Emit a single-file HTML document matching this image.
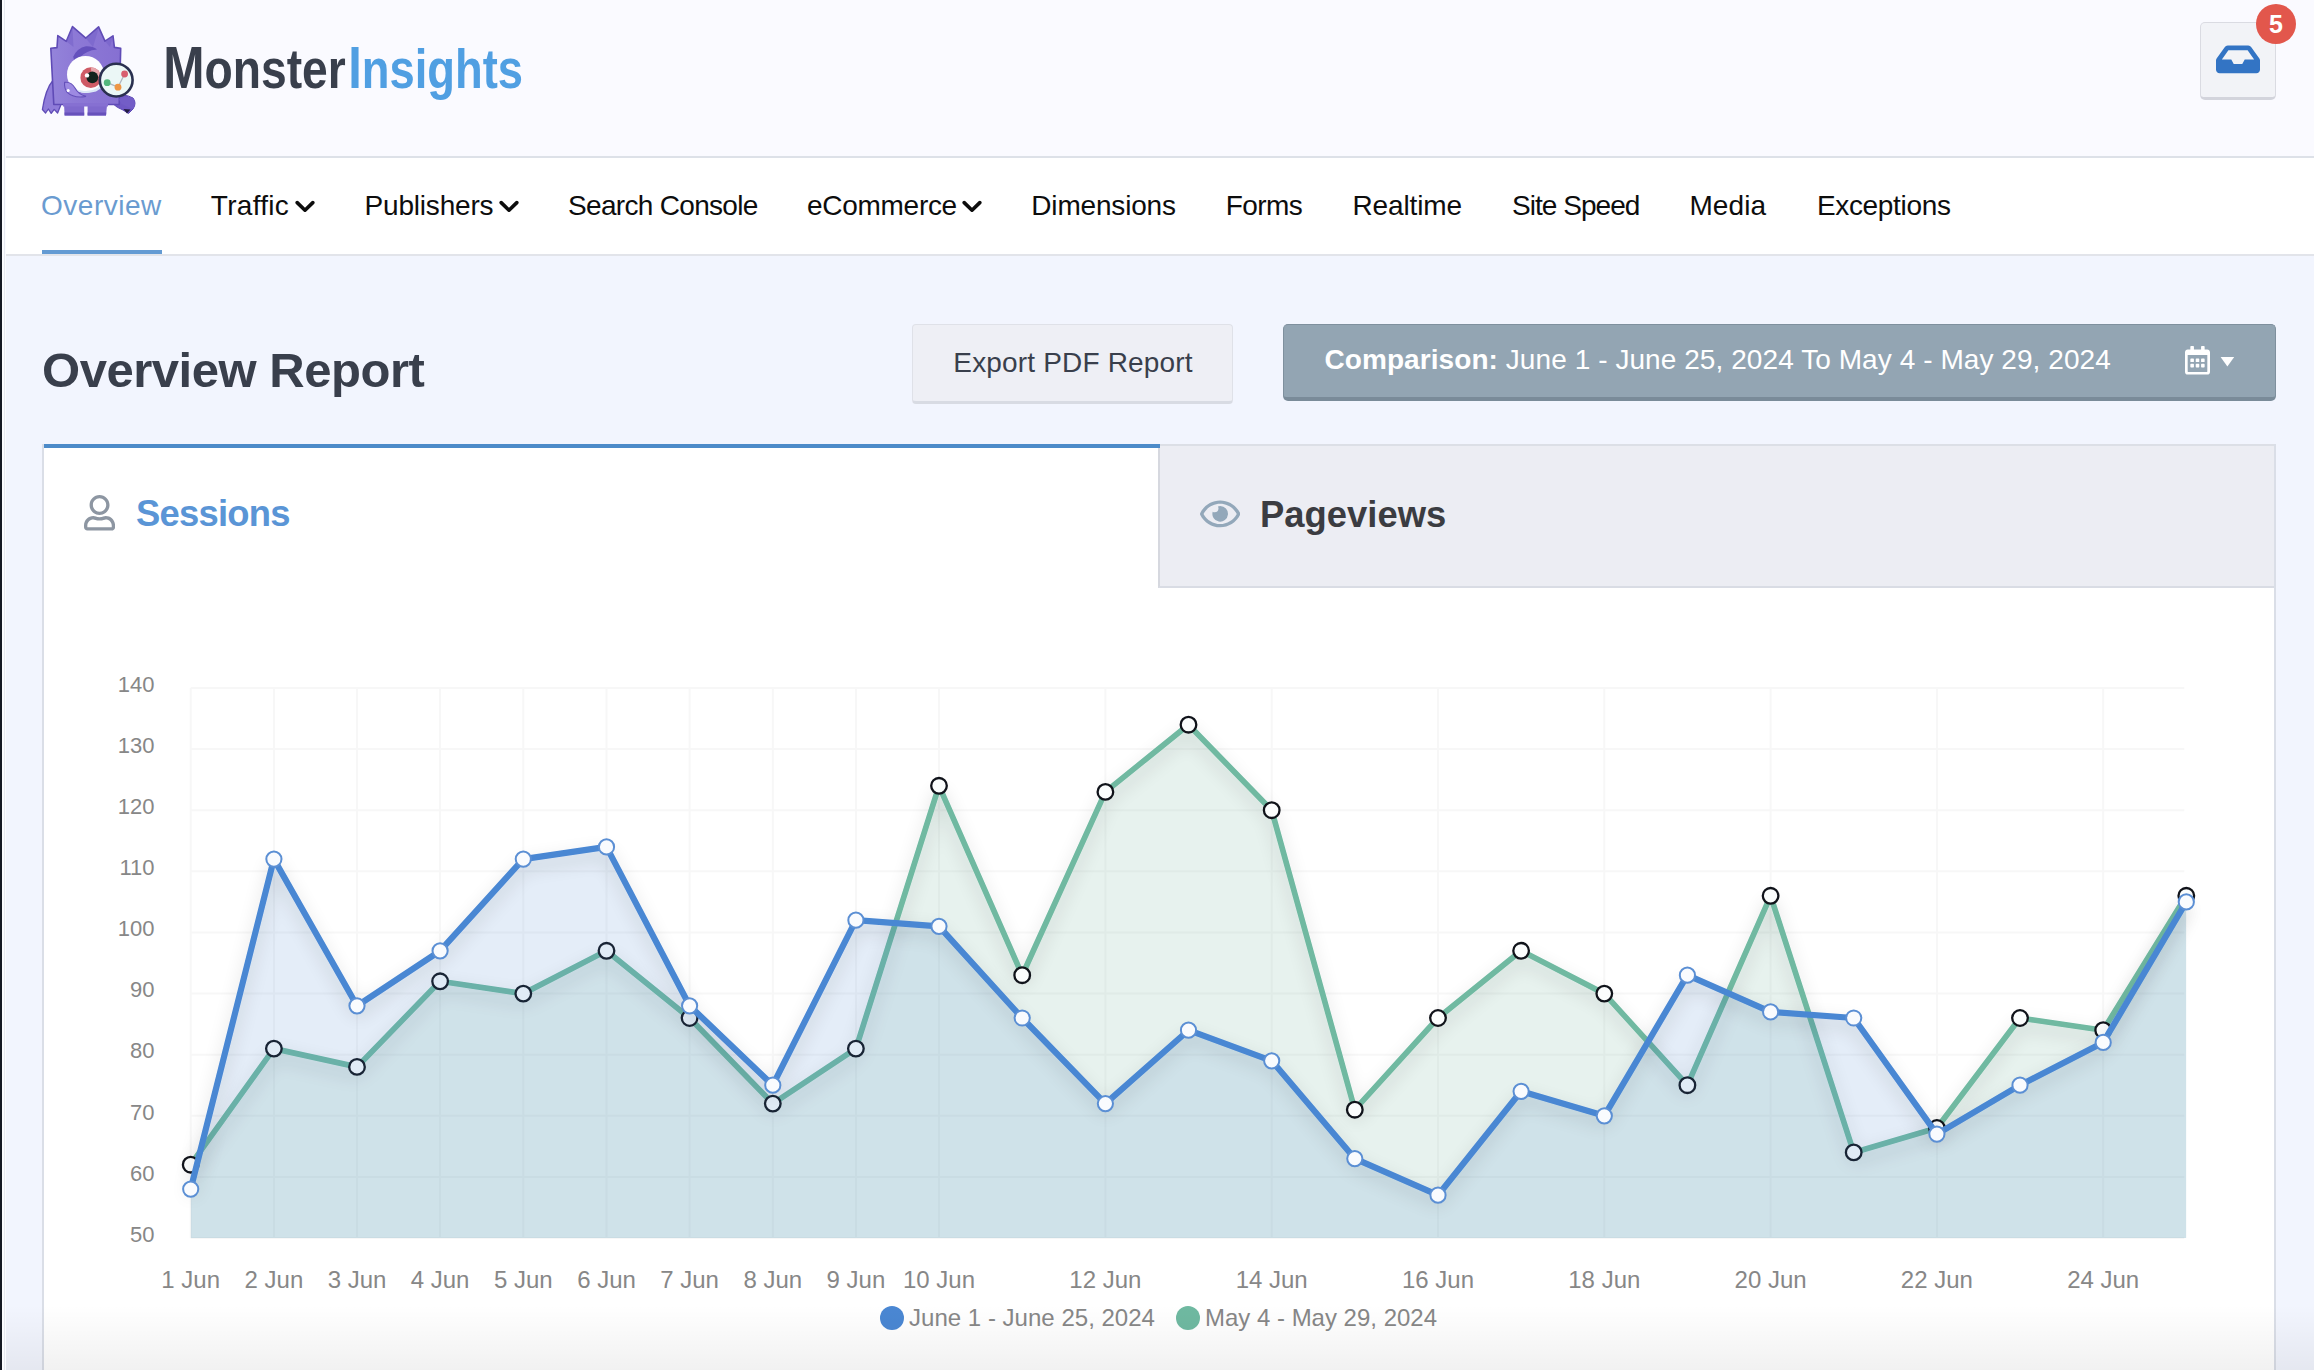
<!DOCTYPE html>
<html lang="en">
<head>
<meta charset="utf-8">
<title>MonsterInsights - Overview Report</title>
<style>
html,body{margin:0;padding:0;}
body{width:2314px;height:1370px;overflow:hidden;background:#f2f5fe;font-family:"Liberation Sans",sans-serif;position:relative;color:#393f4c;}
.abs{position:absolute;}
#edge{left:0;top:0;width:2px;height:1370px;background:#151923;z-index:50;}
#edge2{left:2px;top:0;width:4px;height:1370px;background:linear-gradient(to right,#fbfcff 0,#fbfcff 2.3px,#e6e9f1 2.3px,#e6e9f1 3.3px,#fbfcff 3.3px);z-index:50;}
#header{left:0;top:0;width:2314px;height:156px;background:#fafaff;border-bottom:2px solid #dde1e8;}
#nav{left:0;top:158px;width:2314px;height:96px;background:#fff;border-bottom:2px solid #e2e4ea;}
.nv{position:absolute;top:186px;font-size:28px;line-height:40px;color:#0d0d0d;white-space:nowrap;}
.nv.on{color:#6a9bd0;}
#uline{left:42px;top:250px;width:120px;height:4px;background:#649bd3;}
.chev{position:absolute;top:200px;width:20px;height:13px;}
#h1{left:42px;top:342px;font-size:49px;letter-spacing:-0.47px;line-height:56px;font-weight:bold;color:#393f4c;white-space:nowrap;}
#export{left:912px;top:324px;width:319px;height:76px;background:#eeeff5;border:1px solid #dfe1e8;border-bottom:3px solid #d8dbe3;border-radius:4px;box-sizing:content-box;}
#export span{position:absolute;left:40.3px;top:18.4px;letter-spacing:0.17px;font-size:28px;line-height:40px;color:#393f4c;white-space:nowrap;}
#date{left:1283px;top:324px;width:991px;height:72px;background:#93a5b3;border:1px solid #7f909e;border-bottom:4px solid #7a8b99;border-radius:5px;}
#date .t{position:absolute;left:40.5px;top:15.4px;letter-spacing:0.07px;font-size:28px;line-height:40px;color:#fff;white-space:nowrap;}
#panel{left:42px;top:444px;width:2230px;height:940px;background:#fff;border:2px solid #dadee7;border-top:none;}
#tab1{left:43.5px;top:444px;width:1116.2px;height:4px;background:#4d8bc9;z-index:2;}
#tab2{left:1158px;top:444px;width:1116px;height:144px;background:#ecedf3;border-left:2px solid #d6d8df;border-top:2px solid #dcdfe6;border-bottom:2px solid #d9dce4;box-sizing:border-box;}
#sess{left:135.9px;top:492.2px;font-size:36.4px;line-height:44px;font-weight:bold;color:#5a95d6;white-space:nowrap;letter-spacing:-0.75px;}
#pv{left:1260px;top:493px;font-size:36.4px;line-height:44px;font-weight:bold;color:#3b3c41;white-space:nowrap;letter-spacing:0.03px;}
#fade{left:0;top:1305px;width:2314px;height:65px;background:linear-gradient(to bottom,rgba(0,0,0,0),rgba(0,0,0,0.055));z-index:40;}
</style>
</head>
<body>
<div id="edge" class="abs"></div>
<div id="edge2" class="abs"></div>

<div id="header" class="abs"></div>
<svg class="abs" id="logo" style="left:20px;top:10px" width="140" height="130" viewBox="0 0 140 130">
<defs><linearGradient id="mg" x1="0" y1="0" x2="1" y2="0"><stop offset="0" stop-color="#9484da"/><stop offset="0.35" stop-color="#8d79d6"/><stop offset="1" stop-color="#8670d2"/></linearGradient></defs>
<!-- right arm behind -->
<path d="M92 86 Q104 83 113 88 Q117 93 113 99 L108.5 103.5 L103 100 Q97 98 92 93 Z" fill="#6f58c4" stroke="#5d49b4" stroke-width="1"/>
<path d="M103.5 99 L107 103.6 L110.5 99.5 Z" fill="#231b45"/>
<!-- left arm -->
<path d="M33.2 70 Q25.5 79 22.4 99.5 L25.6 103 L28.4 99 L31.2 103.4 L34.2 99.4 L37.6 103 L40.6 95.5 L38.5 72 Z" fill="#8f7cd9" stroke="#5f4bb6" stroke-width="1.3" stroke-linejoin="round"/>
<!-- spikes + body -->
<path d="M30.8 38.2 L37 37.6 L37.8 25.6 L46.3 31.4 L52.5 16.6 L65.8 28.2 L78.6 16.9 L85 31.2 L93 25.8 L94.4 37.4 L100.7 38.4 L99.2 94.5 L33.8 94.5 Z" fill="url(#mg)" stroke="#5f4bb6" stroke-width="1.6" stroke-linejoin="round"/>
<path d="M46.3 31.4 L52.5 18 L53.5 37 Z M65.8 28.2 L78.6 18.4 L73 37 Z M85 31.2 L92.6 27 L90 37 Z" fill="#7561c8" opacity="0.55"/>
<!-- legs -->
<path d="M44 93.6 H64.2 V105.4 H44.6 Z M67.6 93.6 H87.2 L86 105.4 H67.6 Z" fill="#7f69cd"/>
<path d="M44.5 102.6 H64.2 V105.6 H44.6 Z M67.6 102.6 H86.3 L86 105.6 H67.6 Z" fill="#6751bb"/>
<path d="M43 93 H88 V96.5 H43 Z" fill="#8670d2"/>
<!-- eyebrow -->
<path d="M53.2 46.8 Q57 38 66 36.2 Q73 36 77 39.5 Q66 40.5 60.5 47 Q57 50 55 53.5 Z" fill="#614dba" opacity="0.9"/>
<!-- eye -->
<circle cx="65.5" cy="64.4" r="18.5" fill="#fdfdff"/>
<path d="M50 76.5 Q60 86 76 81.5 Q84 78 84 70 Q78 82 64 81 Q55 80 50 76.5 Z" fill="#dbe7f6"/>
<circle cx="70.8" cy="67.7" r="10.4" fill="#cf5b66"/>
<path d="M70.8 57.3 A10.4 10.4 0 0 1 81 66 L72 67.5 Z" fill="#e7a6ab"/>
<circle cx="72.3" cy="67.3" r="5.9" fill="#12231d"/>
<circle cx="67" cy="65.4" r="2.2" fill="#fff"/>
<!-- smile -->
<path d="M44.6 72.4 Q51 71.4 55 78 Q58.4 84.4 66 86.4 Q54 88.6 47.2 82.4 Q44 78 44.6 72.4 Z" fill="#9d8ae2" stroke="#634fb9" stroke-width="1.1"/>
<circle cx="48.2" cy="80.4" r="1.5" fill="#fff"/>
<!-- magnifier -->
<circle cx="96.2" cy="70.1" r="16.4" fill="#ebf7f6" stroke="#2a3050" stroke-width="2.6"/>
<path d="M87.2 72.7 L98 77.2 L104.6 64" fill="none" stroke="#aeb5be" stroke-width="1.3"/>
<circle cx="104.6" cy="64" r="3.4" fill="#d85f70"/>
<circle cx="87.2" cy="72.7" r="3.4" fill="#52b67c"/>
<circle cx="98" cy="77.2" r="3.4" fill="#ee9645"/>
<!-- hand over handle -->
<path d="M99 89 Q106 85.5 113.4 88.4 Q116.6 94 112.6 99 Q106 96.5 101 93.5 Z" fill="#735dc7"/>
</svg>
<svg class="abs" id="word" style="left:160px;top:30px" width="380" height="90" viewBox="0 0 380 90">
<g font-family="Liberation Sans, sans-serif" font-weight="bold" font-size="58.6">
<text x="3.2" y="57.5" fill="#393f4c" textLength="182.5" lengthAdjust="spacingAndGlyphs"><tspan>M</tspan><tspan font-size="54.6">onster</tspan></text>
<text x="188.2" y="57.5" fill="#509fe2" textLength="174.8" lengthAdjust="spacingAndGlyphs"><tspan>I</tspan><tspan font-size="54.6">nsights</tspan></text>
</g>
</svg>

<div class="abs" id="inbox" style="left:2200px;top:22px;width:74px;height:74px;background:#f2f3f7;border:1px solid #dadbe2;border-bottom:3px solid #d3d4dc;border-radius:5px;"></div>
<svg class="abs" style="left:2216px;top:41.4px" width="44" height="36.8" viewBox="0 0 576 512" preserveAspectRatio="none"><path fill="#3374c4" d="M567.938 243.908L462.25 85.374A48.003 48.003 0 0 0 422.311 64H153.689a48 48 0 0 0-39.938 21.374L8.062 243.908A47.994 47.994 0 0 0 0 270.533V400c0 26.51 21.49 48 48 48h480c26.51 0 48-21.49 48-48V270.533a47.994 47.994 0 0 0-8.062-26.625zM162.252 128h251.497l85.333 128H376l-32 64H232l-32-64H76.918l85.334-128z"/></svg>
<div class="abs" id="badge" style="left:2256px;top:4px;width:40px;height:40px;border-radius:50%;background:#e2574c;color:#fff;font-weight:bold;font-size:25px;line-height:40px;text-align:center;">5</div>


<div id="nav" class="abs"></div>
<div class="nv on" id="nv0" style="left:41.0px;letter-spacing:0.51px">Overview</div>
<div class="nv" id="nv1" style="left:210.8px;letter-spacing:0.30px">Traffic</div>
<svg class="chev" style="left:295.2px" viewBox="0 0 20 13"><path d="M2.2 2.6 L10 10.2 L17.8 2.6" fill="none" stroke="#0d0d0d" stroke-width="3.6" stroke-linecap="round" stroke-linejoin="round"/></svg>
<div class="nv" id="nv2" style="left:364.5px;letter-spacing:-0.18px">Publishers</div>
<svg class="chev" style="left:499.2px" viewBox="0 0 20 13"><path d="M2.2 2.6 L10 10.2 L17.8 2.6" fill="none" stroke="#0d0d0d" stroke-width="3.6" stroke-linecap="round" stroke-linejoin="round"/></svg>
<div class="nv" id="nv3" style="left:568.1px;letter-spacing:-0.69px">Search Console</div>
<div class="nv" id="nv4" style="left:807.1px;letter-spacing:-0.30px">eCommerce</div>
<svg class="chev" style="left:962.4px" viewBox="0 0 20 13"><path d="M2.2 2.6 L10 10.2 L17.8 2.6" fill="none" stroke="#0d0d0d" stroke-width="3.6" stroke-linecap="round" stroke-linejoin="round"/></svg>
<div class="nv" id="nv5" style="left:1031.3px;letter-spacing:-0.18px">Dimensions</div>
<div class="nv" id="nv6" style="left:1225.7px;letter-spacing:-0.55px">Forms</div>
<div class="nv" id="nv7" style="left:1352.4px;letter-spacing:-0.11px">Realtime</div>
<div class="nv" id="nv8" style="left:1512.0px;letter-spacing:-0.96px">Site Speed</div>
<div class="nv" id="nv9" style="left:1689.4px;letter-spacing:0.10px">Media</div>
<div class="nv" id="nv10" style="left:1816.9px;letter-spacing:-0.33px">Exceptions</div>
<div id="uline" class="abs"></div>

<div id="h1" class="abs">Overview Report</div>
<div id="export" class="abs"><span>Export PDF Report</span></div>
<div id="date" class="abs"><span class="t"><b>Comparison:</b> June 1 - June 25, 2024 To May 4 - May 29, 2024</span></div>

<div id="panel" class="abs"></div>
<div id="tab1" class="abs"></div>
<div id="tab2" class="abs"></div>
<div id="sess" class="abs">Sessions</div>
<div id="pv" class="abs">Pageviews</div>
<svg class="abs" style="left:84.2px;top:495.1px" width="31.1" height="35.5" viewBox="0 0 448 512"><path fill="#8d96a2" d="M313.6 304c-28.700 0-42.500 16-89.600 16-47.100 0-60.800-16-89.600-16C60.200 304 0 364.200 0 438.400V464c0 26.500 21.500 48 48 48h352c26.500 0 48-21.500 48-48v-25.600c0-74.200-60.200-134.400-134.400-134.400zM400 464H48v-25.600c0-47.600 38.800-86.400 86.400-86.400 14.600 0 38.300 16 89.600 16 51.700 0 74.900-16 89.600-16 47.600 0 86.400 38.800 86.400 86.400V464zM224 288c79.500 0 144-64.500 144-144S303.500 0 224 0 80 64.500 80 144s64.500 144 144 144zm0-240c52.900 0 96 43.100 96 96s-43.100 96-96 96-96-43.100-96-96 43.100-96 96-96z"/></svg>
<svg class="abs" style="left:1199.9px;top:496.3px" width="40.3" height="35.8" viewBox="0 0 576 512"><path fill="#93a8ba" d="M288 144a110.940 110.940 0 0 0-31.240 5 55.400 55.400 0 0 1 7.240 27 56 56 0 0 1-56 56 55.400 55.400 0 0 1-27-7.240A111.710 111.710 0 1 0 288 144zm284.520 97.400C518.290 135.590 410.930 64 288 64S57.680 135.640 3.480 241.410a32.350 32.350 0 0 0 0 29.190C57.710 376.410 165.070 448 288 448s230.320-71.640 284.520-177.410a32.350 32.350 0 0 0 0-29.190zM288 400c-98.650 0-189.090-55-237.930-144C98.910 167 189.340 112 288 112s189.090 55 237.930 144C477.100 345 386.660 400 288 400z"/></svg>
<svg class="abs" style="left:2185.2px;top:346.3px" width="25" height="28.6" viewBox="0 0 448 512"><path fill="#fff" d="M148 288h-40c-6.600 0-12-5.400-12-12v-40c0-6.600 5.400-12 12-12h40c6.600 0 12 5.400 12 12v40c0 6.600-5.400 12-12 12zm108-12v-40c0-6.600-5.400-12-12-12h-40c-6.600 0-12 5.400-12 12v40c0 6.600 5.400 12 12 12h40c6.600 0 12-5.400 12-12zm96 0v-40c0-6.600-5.400-12-12-12h-40c-6.600 0-12 5.400-12 12v40c0 6.600 5.400 12 12 12h40c6.600 0 12-5.400 12-12zm-96 96v-40c0-6.600-5.400-12-12-12h-40c-6.600 0-12 5.400-12 12v40c0 6.600 5.400 12 12 12h40c6.600 0 12-5.400 12-12zm-96 0v-40c0-6.600-5.400-12-12-12h-40c-6.600 0-12 5.400-12 12v40c0 6.600 5.400 12 12 12h40c6.600 0 12-5.400 12-12zm192 0v-40c0-6.600-5.400-12-12-12h-40c-6.600 0-12 5.400-12 12v40c0 6.600 5.400 12 12 12h40c6.600 0 12-5.400 12-12zm96-260v352c0 26.500-21.500 48-48 48H48c-26.500 0-48-21.500-48-48V112c0-26.500 21.500-48 48-48h48V12c0-6.600 5.400-12 12-12h40c6.600 0 12 5.400 12 12v52h128V12c0-6.600 5.400-12 12-12h40c6.600 0 12 5.400 12 12v52h48c26.500 0 48 21.500 48 48zm-48 346V160H48v298c0 3.300 2.700 6 6 6h340c3.300 0 6-2.700 6-6z"/></svg>
<svg class="abs" style="left:2219px;top:355px" width="17" height="14" viewBox="0 0 17 14"><path fill="#fff" d="M1.6 2 H15.2 L8.4 11.6 Z"/></svg>

<svg class="abs" id="chart" style="left:0;top:0" width="2314" height="1370" viewBox="0 0 2314 1370">
<defs><filter id="sh" x="-5%" y="-20%" width="110%" height="150%"><feGaussianBlur in="SourceAlpha" stdDeviation="9"/><feOffset dx="0" dy="7" result="b"/><feComponentTransfer><feFuncA type="linear" slope="0.17"/></feComponentTransfer><feMerge><feMergeNode/><feMergeNode in="SourceGraphic"/></feMerge></filter>
<clipPath id="cp"><rect x="190.7" y="600" width="1995.6" height="638.0"/></clipPath></defs>
<g stroke="#f7f7f7" stroke-width="2"><line x1="190.7" x2="2184.3" y1="1238.0" y2="1238.0"/><line x1="190.7" x2="2184.3" y1="1176.9" y2="1176.9"/><line x1="190.7" x2="2184.3" y1="1115.8" y2="1115.8"/><line x1="190.7" x2="2184.3" y1="1054.7" y2="1054.7"/><line x1="190.7" x2="2184.3" y1="993.6" y2="993.6"/><line x1="190.7" x2="2184.3" y1="932.5" y2="932.5"/><line x1="190.7" x2="2184.3" y1="871.3" y2="871.3"/><line x1="190.7" x2="2184.3" y1="810.2" y2="810.2"/><line x1="190.7" x2="2184.3" y1="749.1" y2="749.1"/><line x1="190.7" x2="2184.3" y1="688.0" y2="688.0"/><line x1="190.7" x2="190.7" y1="688.0" y2="1238.0"/><line x1="273.9" x2="273.9" y1="688.0" y2="1238.0"/><line x1="357.0" x2="357.0" y1="688.0" y2="1238.0"/><line x1="440.1" x2="440.1" y1="688.0" y2="1238.0"/><line x1="523.3" x2="523.3" y1="688.0" y2="1238.0"/><line x1="606.5" x2="606.5" y1="688.0" y2="1238.0"/><line x1="689.6" x2="689.6" y1="688.0" y2="1238.0"/><line x1="772.8" x2="772.8" y1="688.0" y2="1238.0"/><line x1="855.9" x2="855.9" y1="688.0" y2="1238.0"/><line x1="939.0" x2="939.0" y1="688.0" y2="1238.0"/><line x1="1105.4" x2="1105.4" y1="688.0" y2="1238.0"/><line x1="1271.7" x2="1271.7" y1="688.0" y2="1238.0"/><line x1="1438.0" x2="1438.0" y1="688.0" y2="1238.0"/><line x1="1604.3" x2="1604.3" y1="688.0" y2="1238.0"/><line x1="1770.6" x2="1770.6" y1="688.0" y2="1238.0"/><line x1="1936.9" x2="1936.9" y1="688.0" y2="1238.0"/><line x1="2103.2" x2="2103.2" y1="688.0" y2="1238.0"/></g>
<g font-family="Liberation Sans, sans-serif" font-size="22" fill="#878787"><text x="154.5" y="1241.7" text-anchor="end">50</text><text x="154.5" y="1180.6" text-anchor="end">60</text><text x="154.5" y="1119.5" text-anchor="end">70</text><text x="154.5" y="1058.4" text-anchor="end">80</text><text x="154.5" y="997.3" text-anchor="end">90</text><text x="154.5" y="936.2" text-anchor="end">100</text><text x="154.5" y="875.0" text-anchor="end">110</text><text x="154.5" y="813.9" text-anchor="end">120</text><text x="154.5" y="752.8" text-anchor="end">130</text><text x="154.5" y="691.7" text-anchor="end">140</text></g>
<g font-family="Liberation Sans, sans-serif" font-size="24" fill="#878787"><text x="190.7" y="1287.8" text-anchor="middle">1 Jun</text><text x="273.9" y="1287.8" text-anchor="middle">2 Jun</text><text x="357.0" y="1287.8" text-anchor="middle">3 Jun</text><text x="440.1" y="1287.8" text-anchor="middle">4 Jun</text><text x="523.3" y="1287.8" text-anchor="middle">5 Jun</text><text x="606.5" y="1287.8" text-anchor="middle">6 Jun</text><text x="689.6" y="1287.8" text-anchor="middle">7 Jun</text><text x="772.8" y="1287.8" text-anchor="middle">8 Jun</text><text x="855.9" y="1287.8" text-anchor="middle">9 Jun</text><text x="939.0" y="1287.8" text-anchor="middle">10 Jun</text><text x="1105.4" y="1287.8" text-anchor="middle">12 Jun</text><text x="1271.7" y="1287.8" text-anchor="middle">14 Jun</text><text x="1438.0" y="1287.8" text-anchor="middle">16 Jun</text><text x="1604.3" y="1287.8" text-anchor="middle">18 Jun</text><text x="1770.6" y="1287.8" text-anchor="middle">20 Jun</text><text x="1936.9" y="1287.8" text-anchor="middle">22 Jun</text><text x="2103.2" y="1287.8" text-anchor="middle">24 Jun</text></g>
<g clip-path="url(#cp)"><path d="M190.7 1164.7 L273.9 1048.6 L357.0 1066.9 L440.1 981.3 L523.3 993.6 L606.5 950.8 L689.6 1018.0 L772.8 1103.6 L855.9 1048.6 L939.0 785.8 L1022.2 975.2 L1105.4 791.9 L1188.5 724.7 L1271.7 810.2 L1354.8 1109.7 L1438.0 1018.0 L1521.1 950.8 L1604.3 993.6 L1687.4 1085.2 L1770.6 895.8 L1853.7 1152.4 L1936.9 1128.0 L2020.0 1018.0 L2103.2 1030.2 L2186.3 895.8 L2186.3 1238.0 L190.7 1238.0 Z" fill="rgba(120,180,160,0.175)"/></g>
<path d="M190.7 1164.7 L273.9 1048.6 L357.0 1066.9 L440.1 981.3 L523.3 993.6 L606.5 950.8 L689.6 1018.0 L772.8 1103.6 L855.9 1048.6 L939.0 785.8 L1022.2 975.2 L1105.4 791.9 L1188.5 724.7 L1271.7 810.2 L1354.8 1109.7 L1438.0 1018.0 L1521.1 950.8 L1604.3 993.6 L1687.4 1085.2 L1770.6 895.8 L1853.7 1152.4 L1936.9 1128.0 L2020.0 1018.0 L2103.2 1030.2 L2186.3 895.8" fill="none" stroke="#6fb9a1" stroke-width="5.7" stroke-linejoin="round" stroke-linecap="butt" filter="url(#sh)"/>
<g fill="#fbfdfd" stroke="#10131a" stroke-width="2.3"><circle cx="190.7" cy="1164.7" r="7.8"/><circle cx="273.9" cy="1048.6" r="7.8"/><circle cx="357.0" cy="1066.9" r="7.8"/><circle cx="440.1" cy="981.3" r="7.8"/><circle cx="523.3" cy="993.6" r="7.8"/><circle cx="606.5" cy="950.8" r="7.8"/><circle cx="689.6" cy="1018.0" r="7.8"/><circle cx="772.8" cy="1103.6" r="7.8"/><circle cx="855.9" cy="1048.6" r="7.8"/><circle cx="939.0" cy="785.8" r="7.8"/><circle cx="1022.2" cy="975.2" r="7.8"/><circle cx="1105.4" cy="791.9" r="7.8"/><circle cx="1188.5" cy="724.7" r="7.8"/><circle cx="1271.7" cy="810.2" r="7.8"/><circle cx="1354.8" cy="1109.7" r="7.8"/><circle cx="1438.0" cy="1018.0" r="7.8"/><circle cx="1521.1" cy="950.8" r="7.8"/><circle cx="1604.3" cy="993.6" r="7.8"/><circle cx="1687.4" cy="1085.2" r="7.8"/><circle cx="1770.6" cy="895.8" r="7.8"/><circle cx="1853.7" cy="1152.4" r="7.8"/><circle cx="1936.9" cy="1128.0" r="7.8"/><circle cx="2020.0" cy="1018.0" r="7.8"/><circle cx="2103.2" cy="1030.2" r="7.8"/><circle cx="2186.3" cy="895.8" r="7.8"/></g>
<g clip-path="url(#cp)"><path d="M190.7 1189.1 L273.9 859.1 L357.0 1005.8 L440.1 950.8 L523.3 859.1 L606.5 846.9 L689.6 1005.8 L772.8 1085.2 L855.9 920.2 L939.0 926.3 L1022.2 1018.0 L1105.4 1103.6 L1188.5 1030.2 L1271.7 1060.8 L1354.8 1158.6 L1438.0 1195.2 L1521.1 1091.3 L1604.3 1115.8 L1687.4 975.2 L1770.6 1011.9 L1853.7 1018.0 L1936.9 1134.1 L2020.0 1085.2 L2103.2 1042.4 L2186.3 901.9 L2186.3 1238.0 L190.7 1238.0 Z" fill="rgba(74,135,211,0.15)"/></g>
<path d="M190.7 1189.1 L273.9 859.1 L357.0 1005.8 L440.1 950.8 L523.3 859.1 L606.5 846.9 L689.6 1005.8 L772.8 1085.2 L855.9 920.2 L939.0 926.3 L1022.2 1018.0 L1105.4 1103.6 L1188.5 1030.2 L1271.7 1060.8 L1354.8 1158.6 L1438.0 1195.2 L1521.1 1091.3 L1604.3 1115.8 L1687.4 975.2 L1770.6 1011.9 L1853.7 1018.0 L1936.9 1134.1 L2020.0 1085.2 L2103.2 1042.4 L2186.3 901.9" fill="none" stroke="#4a87d3" stroke-width="6.2" stroke-linejoin="round" stroke-linecap="butt" filter="url(#sh)"/>
<g fill="#f9fbfe" stroke="#5b8fd4" stroke-width="2"><circle cx="190.7" cy="1189.1" r="7.6"/><circle cx="273.9" cy="859.1" r="7.6"/><circle cx="357.0" cy="1005.8" r="7.6"/><circle cx="440.1" cy="950.8" r="7.6"/><circle cx="523.3" cy="859.1" r="7.6"/><circle cx="606.5" cy="846.9" r="7.6"/><circle cx="689.6" cy="1005.8" r="7.6"/><circle cx="772.8" cy="1085.2" r="7.6"/><circle cx="855.9" cy="920.2" r="7.6"/><circle cx="939.0" cy="926.3" r="7.6"/><circle cx="1022.2" cy="1018.0" r="7.6"/><circle cx="1105.4" cy="1103.6" r="7.6"/><circle cx="1188.5" cy="1030.2" r="7.6"/><circle cx="1271.7" cy="1060.8" r="7.6"/><circle cx="1354.8" cy="1158.6" r="7.6"/><circle cx="1438.0" cy="1195.2" r="7.6"/><circle cx="1521.1" cy="1091.3" r="7.6"/><circle cx="1604.3" cy="1115.8" r="7.6"/><circle cx="1687.4" cy="975.2" r="7.6"/><circle cx="1770.6" cy="1011.9" r="7.6"/><circle cx="1853.7" cy="1018.0" r="7.6"/><circle cx="1936.9" cy="1134.1" r="7.6"/><circle cx="2020.0" cy="1085.2" r="7.6"/><circle cx="2103.2" cy="1042.4" r="7.6"/><circle cx="2186.3" cy="901.9" r="7.6"/></g>
<circle cx="892" cy="1318" r="12" fill="#4a87d3"/><circle cx="1188" cy="1318" r="12" fill="#6fb9a1"/>
<g font-family="Liberation Sans, sans-serif" font-size="24" fill="#878787"><text x="909" y="1326" textLength="246" lengthAdjust="spacingAndGlyphs">June 1 - June 25, 2024</text><text x="1205" y="1326" textLength="232" lengthAdjust="spacingAndGlyphs">May 4 - May 29, 2024</text></g>
</svg>
<div id="fade" class="abs"></div>
</body>
</html>
